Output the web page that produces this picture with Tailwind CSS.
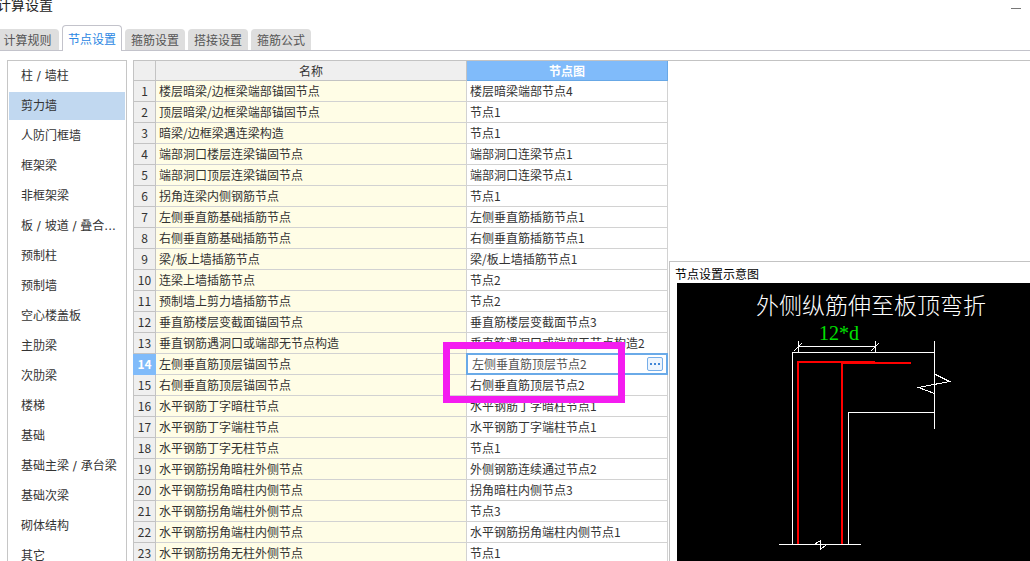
<!DOCTYPE html>
<html lang="zh-CN">
<head>
<meta charset="utf-8">
<title>计算设置</title>
<script src="https://cdn.jsdelivr.net/npm/@tailwindcss/browser@4"></script>
</head>
<body class="flex h-screen flex-col overflow-hidden bg-white font-['Noto_Sans_CJK_SC',sans-serif] text-xs text-[#333]">
<header class="flex h-6 shrink-0 items-start justify-between pr-2">
  <h1 class="-ml-[3px] h-6 text-sm leading-2 text-[#222]">计算设置</h1>
  <button type="button" aria-label="最小化" class="flex h-4 w-3 items-center justify-center"><span class="h-px w-2.5 bg-[#777]"></span></button>
</header>

<div role="tablist" class="flex h-[27px] shrink-0 items-end gap-[3px] border-b border-[#c3c3cb] leading-4">
  <button type="button" role="tab" class="h-[21px] w-[59px] rounded-tr-sm bg-[#dedede] pr-1 text-[#555]">计算规则</button>
  <button type="button" role="tab" aria-selected="true" class="-mb-px h-[26px] w-[60px] rounded-t border border-b-0 border-[#c3c3cb] bg-white text-[#2b87e3]">节点设置</button>
  <button type="button" role="tab" class="h-[21px] w-[60px] rounded-t-sm bg-[#dedede] text-[#555]">箍筋设置</button>
  <button type="button" role="tab" class="h-[21px] w-[60px] rounded-t-sm bg-[#dedede] text-[#555]">搭接设置</button>
  <button type="button" role="tab" class="h-[21px] w-[60px] rounded-t-sm bg-[#dedede] text-[#555]">箍筋公式</button>
</div>

<main class="flex min-h-0 flex-1 pt-[9px] pl-[7px]">
  <nav aria-label="构件类型" class="mr-1.5 flex w-[120px] shrink-0 flex-col gap-0.5 overflow-hidden border border-b-0 border-[#c6c6c6] p-px pb-0 font-['DejaVu_Sans','Noto_Sans_CJK_SC',sans-serif] [&>button]:h-7 [&>button]:shrink-0 [&>button]:pl-3 [&>button]:text-left [&>button]:whitespace-nowrap">
    <button type="button">柱 / 墙柱</button>
    <button type="button" aria-current="true" class="bg-[#c1d8f0]">剪力墙</button>
    <button type="button">人防门框墙</button>
    <button type="button">框架梁</button>
    <button type="button">非框架梁</button>
    <button type="button">板 / 坡道 / 叠合...</button>
    <button type="button">预制柱</button>
    <button type="button">预制墙</button>
    <button type="button">空心楼盖板</button>
    <button type="button">主肋梁</button>
    <button type="button">次肋梁</button>
    <button type="button">楼梯</button>
    <button type="button">基础</button>
    <button type="button">基础主梁 / 承台梁</button>
    <button type="button">基础次梁</button>
    <button type="button">砌体结构</button>
    <button type="button">其它</button>
  </nav>

  <section aria-label="节点列表" class="w-[536px] shrink-0 overflow-hidden border-t border-[#c3c3c3]">
    <table class="w-[535px] table-fixed border-separate border-spacing-0 border-l border-[#c3c3c3] leading-4 [&_td]:h-[21px] [&_td]:border-r [&_td]:border-b [&_td]:border-[#d2d2d2] [&_td]:p-0 [&_td]:pl-[3px] [&_td]:whitespace-nowrap [&_tbody_td:first-of-type]:bg-[#fffde6] [&_tbody_th]:border-r [&_tbody_th]:border-b [&_tbody_th]:border-[#c3c3c3] [&_tbody_th]:p-0 [&_tbody_th]:font-normal">
      <colgroup><col class="w-[22px]"><col><col class="w-[201px]"></colgroup>
      <thead>
        <tr class="h-5">
          <th class="border-r border-b border-[#c3c3c3] bg-[#efefef] p-0"></th>
          <th scope="col" class="border-r border-b border-[#c3c3c3] bg-[#efefef] p-0 font-normal">名称</th>
          <th scope="col" class="border-r border-b border-[#68a8e6] bg-[#80bbfa] p-0 font-bold text-white">节点图</th>
        </tr>
      </thead>
      <tbody class="[&_th]:bg-[#efefef]">
        <tr><th scope="row">1</th><td>楼层暗梁/边框梁端部锚固节点</td><td>楼层暗梁端部节点4</td></tr>
        <tr><th scope="row">2</th><td>顶层暗梁/边框梁端部锚固节点</td><td>节点1</td></tr>
        <tr><th scope="row">3</th><td>暗梁/边框梁遇连梁构造</td><td>节点1</td></tr>
        <tr><th scope="row">4</th><td>端部洞口楼层连梁锚固节点</td><td>端部洞口连梁节点1</td></tr>
        <tr><th scope="row">5</th><td>端部洞口顶层连梁锚固节点</td><td>端部洞口连梁节点1</td></tr>
        <tr><th scope="row">6</th><td>拐角连梁内侧钢筋节点</td><td>节点1</td></tr>
        <tr><th scope="row">7</th><td>左侧垂直筋基础插筋节点</td><td>左侧垂直筋插筋节点1</td></tr>
        <tr><th scope="row">8</th><td>右侧垂直筋基础插筋节点</td><td>右侧垂直筋插筋节点1</td></tr>
        <tr><th scope="row">9</th><td>梁/板上墙插筋节点</td><td>梁/板上墙插筋节点1</td></tr>
        <tr><th scope="row">10</th><td>连梁上墙插筋节点</td><td>节点2</td></tr>
        <tr><th scope="row">11</th><td>预制墙上剪力墙插筋节点</td><td>节点2</td></tr>
        <tr><th scope="row">12</th><td>垂直筋楼层变截面锚固节点</td><td>垂直筋楼层变截面节点3</td></tr>
        <tr><th scope="row">13</th><td>垂直钢筋遇洞口或端部无节点构造</td><td>垂直筋遇洞口或端部无节点构造2</td></tr>
        <tr>
          <th scope="row"><div class="-m-px h-[21px] bg-[#80bbfa] pt-0.5 font-bold text-white">14</div></th>
          <td><label for="node-14">左侧垂直筋顶层锚固节点</label></td>
          <td>
            <div class="relative -my-px -mr-px -ml-1 flex h-[22px] items-center border-2 border-[#6aaae8] bg-white pr-[3px] pl-1">
              <input id="node-14" type="text" value="左侧垂直筋顶层节点2" class="h-4 min-w-0 flex-1 text-[#555] outline-none">
              <button type="button" aria-label="选择节点图" class="flex h-3.5 w-4 items-center justify-center gap-0.5 rounded-xs border border-[#76aee9] bg-[#edf5fe]">
                <span class="size-0.5 bg-[#3f86d8]"></span><span class="size-0.5 bg-[#3f86d8]"></span><span class="size-0.5 bg-[#3f86d8]"></span>
              </button>
              <span class="pointer-events-none absolute -top-[13px] -left-[25px] h-[61px] w-[182px] border-[7px] border-[#f41cf0]"></span>
            </div>
          </td>
        </tr>
        <tr><th scope="row">15</th><td>右侧垂直筋顶层锚固节点</td><td>右侧垂直筋顶层节点2</td></tr>
        <tr><th scope="row">16</th><td>水平钢筋丁字暗柱节点</td><td>水平钢筋丁字暗柱节点1</td></tr>
        <tr><th scope="row">17</th><td>水平钢筋丁字端柱节点</td><td>水平钢筋丁字端柱节点1</td></tr>
        <tr><th scope="row">18</th><td>水平钢筋丁字无柱节点</td><td>节点1</td></tr>
        <tr><th scope="row">19</th><td>水平钢筋拐角暗柱外侧节点</td><td>外侧钢筋连续通过节点2</td></tr>
        <tr><th scope="row">20</th><td>水平钢筋拐角暗柱内侧节点</td><td>拐角暗柱内侧节点3</td></tr>
        <tr><th scope="row">21</th><td>水平钢筋拐角端柱外侧节点</td><td>节点3</td></tr>
        <tr><th scope="row">22</th><td>水平钢筋拐角端柱内侧节点</td><td>水平钢筋拐角端柱内侧节点1</td></tr>
        <tr><th scope="row">23</th><td>水平钢筋拐角无柱外侧节点</td><td>节点1</td></tr>
      </tbody>
    </table>
  </section>

  <div class="flex min-w-0 flex-1 flex-col border-t border-[#c3c3c3]">
    <div class="h-[200px] shrink-0"></div>
    <section class="flex min-h-0 flex-1 flex-col border-t border-l border-[#c3c3c3]">
      <h2 class="h-[21px] shrink-0 pt-1 pl-[5px] leading-4 text-black">节点设置示意图</h2>
      <div class="ml-[7px] min-h-0 flex-1 overflow-hidden bg-black">
        <svg width="353" height="278" viewBox="0 0 353 278" fill="none" role="img" aria-label="外侧纵筋伸至板顶弯折">
          <text x="79" y="31" font-size="23" font-weight="300" fill="#fff" class="font-['Noto_Sans_CJK_SC',sans-serif]">外侧纵筋伸至板顶弯折</text>
          <text x="142" y="57" font-size="20" fill="#00e000" class="font-['Liberation_Serif',serif]">12*d</text>
          <g stroke="#fff" shape-rendering="crispEdges">
            <path d="M121 63.5H199M121.5 58V69M198.5 58V69M117 68L125 60M194 68L202 60"/>
            <path d="M115.5 262V69.5H257.5M257.5 58V146M171.5 262V129.5H257.5"/>
            <path d="M257.5 91L272.5 98.5L241.5 104.5L257.5 110.5"/>
            <path d="M102 261.5H184M138 261L143.5 257.5V266.5L149 262"/>
          </g>
          <g stroke="#f00" stroke-width="2" shape-rendering="crispEdges">
            <path d="M121 261V79H198M165 261V80H234"/>
          </g>
        </svg>
      </div>
    </section>
  </div>
</main>
</body>
</html>
